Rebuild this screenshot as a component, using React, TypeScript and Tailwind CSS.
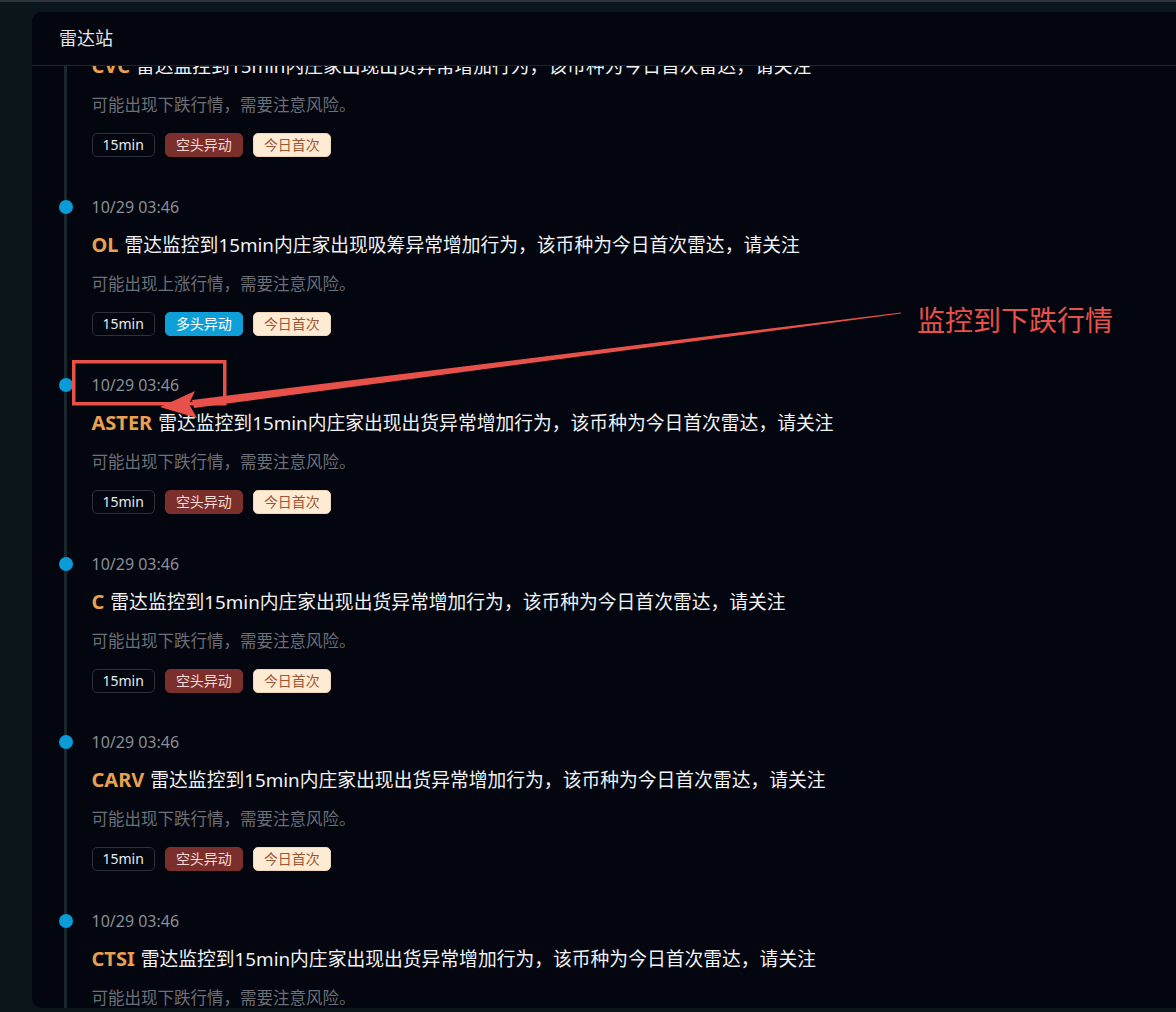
const items = [
  { sym: "CVC", act: "出货", dir: "下跌", side: "short" },
  { sym: "OL", act: "吸筹", dir: "上涨", side: "long" },
  { sym: "ASTER", act: "出货", dir: "下跌", side: "short" },
  { sym: "C", act: "出货", dir: "下跌", side: "short" },
  { sym: "CARV", act: "出货", dir: "下跌", side: "short" },
  { sym: "CTSI", act: "出货", dir: "下跌", side: "short" },
];

function RadarItem({ sym, act, dir, side }: (typeof items)[number]) {
  return (
    <div className="relative flex h-[178.5px] flex-col">
      {/* 时间轴圆点 */}
      <span className="absolute left-[-33px] top-[5px] h-[14px] w-[14px] rounded-full bg-[#0a9bd9]" />
      <div className="text-[16px] leading-[24px] text-[#8a8e97]">10/29 03:46</div>
      <div className="mt-[12px] text-[18.8px] leading-[28px] whitespace-nowrap text-[#f1f2f4]">
        <span className="mr-[6px] text-[20px] font-bold text-[#e9a050]">{sym}</span>
        雷达监控到15min内庄家出现{act}异常增加行为，该币种为今日首次雷达，请关注
      </div>
      <div className="mt-[13px] text-[16.5px] leading-[24px] text-[#6b6f78]">
        可能出现{dir}行情，需要注意风险。
      </div>
      <div className="mt-[16px] flex gap-[10px] text-[14px] leading-[22px]">
        <span className="rounded-[5px] border border-[#28313c] px-[10px] text-[#e8eaed]">15min</span>
        {side === "long" ? (
          <span className="rounded-[5px] border border-[#0e9fd9] bg-[#0e9fd9] px-[10px] text-white">多头异动</span>
        ) : (
          <span className="rounded-[5px] border border-[#7a2f2c] bg-[#7a2f2c] px-[10px] text-[#f6dcd4]">空头异动</span>
        )}
        <span className="rounded-[5px] border border-[#f0d6b8] bg-[#fdebd3] px-[10px] text-[#9c5636]">今日首次</span>
      </div>
    </div>
  );
}

export default function App() {
  return (
    <div className="relative h-[1012px] w-[1176px] overflow-hidden border-t-2 border-[#2e363b] bg-[#0b161a] pl-[32px] pt-[10px] font-['Noto_Sans','Noto_Sans_CJK_SC',sans-serif]">
      <div className="flex h-[996px] flex-col overflow-hidden rounded-l-[10px] bg-[#03060e]">
        {/* 标题栏 */}
        <div className="relative z-10 flex h-[54px] shrink-0 items-center border-b border-[#1a272d] bg-[#03060e] px-[27px] text-[18px] text-[#e3e5e8]">
          雷达站
        </div>

        {/* 列表 */}
        <div className="flex-1 overflow-hidden">
          <div className="ml-[32px] mt-[-50px] border-l-[3px] border-[#19282f] pl-[24.5px]">
            {items.map((it) => (
              <RadarItem key={it.sym} {...it} />
            ))}
          </div>
        </div>
      </div>

      {/* 标注 */}
      <svg className="pointer-events-none absolute left-0 top-0" width="1176" height="1012" viewBox="0 0 1176 1012">
        <rect x="73.75" y="359.75" width="151" height="42" fill="none" stroke="#e8504a" strokeWidth="3.5" />
        <polygon points="192,398 901,310.4 901,311.6 194,406" fill="#e8504a" />
        <polygon points="160,405 195,389 189,402 197,416" fill="#e8504a" />
      </svg>
      <div className="pointer-events-none absolute left-[917px] top-[299px] text-[28px] leading-[38px] text-[#e8504a]">
        监控到下跌行情
      </div>
    </div>
  );
}
